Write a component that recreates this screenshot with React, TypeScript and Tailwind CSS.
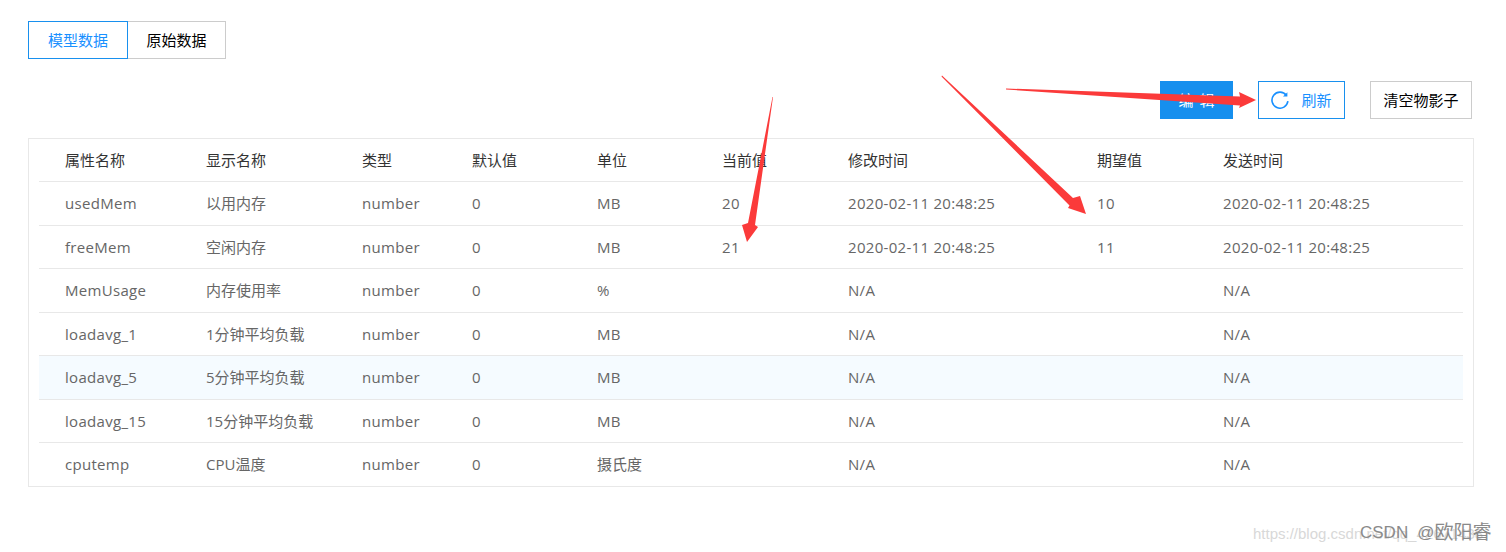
const fontStack = "font-['Open_Sans','Noto_Sans_CJK_SC',sans-serif]";

const columns = ['属性名称', '显示名称', '类型', '默认值', '单位', '当前值', '修改时间', '期望值', '发送时间'];

const rows = [
  ['usedMem', '以用内存', 'number', '0', 'MB', '20', '2020-02-11 20:48:25', '10', '2020-02-11 20:48:25'],
  ['freeMem', '空闲内存', 'number', '0', 'MB', '21', '2020-02-11 20:48:25', '11', '2020-02-11 20:48:25'],
  ['MemUsage', '内存使用率', 'number', '0', '%', '', 'N/A', '', 'N/A'],
  ['loadavg_1', '1分钟平均负载', 'number', '0', 'MB', '', 'N/A', '', 'N/A'],
  ['loadavg_5', '5分钟平均负载', 'number', '0', 'MB', '', 'N/A', '', 'N/A'],
  ['loadavg_15', '15分钟平均负载', 'number', '0', 'MB', '', 'N/A', '', 'N/A'],
  ['cputemp', 'CPU温度', 'number', '0', '摄氏度', '', 'N/A', '', 'N/A'],
];

const gridCols = 'grid grid-cols-[167px_156px_110px_125px_125px_126px_249px_126px_240px]';

function ReloadIcon() {
  return (
    <svg width="18" height="18" viewBox="0 0 18 18" fill="none" stroke="currentColor" strokeWidth="1.6">
      <path d="M15.4 4.4 A8 8 0 1 0 16.9 10.2" />
      <path d="M16.4 1.2 L16.4 5.6 L12 5.6 Z" fill="currentColor" stroke="none" />
    </svg>
  );
}

function Arrows() {
  return (
    <svg className="absolute left-0 top-0 pointer-events-none" width="1506" height="552">
      <polygon fill="#fb3a3a" points="1006,88.5 1240,96.5 1239,92 1256,100 1239,108 1240,105.5 1006,89.5" />
      <polygon fill="#fb3a3a" points="942,75.5 1073,198 1080,196 1086,214 1068,208 1069.5,205.5 941.5,76.5" />
      <polygon fill="#fb3a3a" points="773,97 755,225 758,227 747,242 742,225 748,223 772.5,97" />
    </svg>
  );
}

export default function App() {
  return (
    <div className={`relative w-[1506px] h-[552px] overflow-hidden bg-white pt-[21px] pl-[28px] pr-[32px] ${fontStack}`}>
      {/* Tabs */}
      <div className="flex text-[15px]">
        <div className="w-[100px] h-[38px] flex items-center justify-center border border-[#1890ee] text-[#1890ff] z-10">模型数据</div>
        <div className="w-[99px] h-[38px] -ml-px flex items-center justify-center border border-[#ccc] text-black">原始数据</div>
      </div>

      {/* Toolbar */}
      <div className="flex justify-end gap-[25px] mt-[22px] pr-[2px] text-[15px]">
        <div className="w-[73px] h-[38px] flex items-center justify-center gap-[6px] bg-[#168fee] text-white">
          <span>编</span>
          <span>辑</span>
        </div>
        <div className="w-[87px] h-[38px] flex items-center justify-center gap-[12px] border border-[#1890ee] text-[#1890ff]">
          <ReloadIcon />
          刷新
        </div>
        <div className="w-[102px] h-[38px] flex items-center justify-center border border-[#ccc] text-black">清空物影子</div>
      </div>

      {/* Table */}
      <div className="mt-[19px] h-[349px] border border-[#e8e8e8] px-[10px] text-[15px]">
        <div className={`${gridCols} h-[43px] items-center border-b border-[#e8e8e8] text-[#333]`}>
          {columns.map((c, i) => (
            <div key={c} className={i === 0 ? 'pl-[26px]' : ''}>{c}</div>
          ))}
        </div>
        {rows.map((row, r) => (
          <div
            key={row[0]}
            className={`${gridCols} h-[43.5px] items-center text-[#666] border-b ${r < rows.length - 1 ? 'border-[#e8e8e8]' : 'border-transparent'} ${r === 4 ? 'bg-[#f5fbff]' : ''}`}
          >
            {row.map((cell, i) => (
              <div
                key={i}
                className={`${i === 0 ? 'pl-[26px]' : ''} ${/^[\x00-\x7f]*$/.test(cell) ? 'tracking-[0.3px]' : ''}`}
              >
                {cell}
              </div>
            ))}
          </div>
        ))}
      </div>

      <Arrows />

      {/* Watermark */}
      <div className="absolute left-[1253px] top-[524px] text-[15px] leading-[20px] whitespace-nowrap text-[#d8d8d8] font-['Liberation_Sans',sans-serif]">https://blog.csdn.net/qq_42671438</div>
      <div className="absolute left-[1360px] top-[521px] h-[24px] flex items-center whitespace-nowrap text-[#8a8a8a] font-['Liberation_Sans','Noto_Sans_CJK_SC',sans-serif]">
        <span className="text-[17px]">CSDN</span>
        <span className="text-[17px] ml-[9px]">@</span>
        <span className="text-[19px]">欧阳睿</span>
      </div>
    </div>
  );
}
